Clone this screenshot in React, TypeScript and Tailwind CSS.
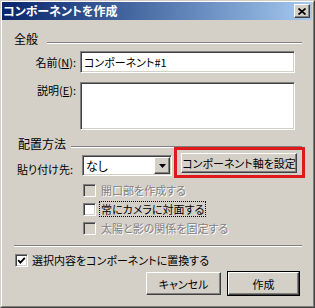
const font =
  "font-['Noto_Sans_CJK_JP','Noto_Sans',sans-serif] text-[11px] leading-[14px] [font-feature-settings:'palt'] text-black whitespace-nowrap";

const raised =
  "border border-t-white border-l-white border-r-[#404040] border-b-[#404040] shadow-[inset_-1px_-1px_0_#808080] bg-[#d4d0c8]";

const sunken =
  "border border-t-[#808080] border-l-[#808080] border-r-white border-b-white shadow-[inset_1px_1px_0_#404040,inset_-1px_-1px_0_#d4d0c8]";

function Etched({ className = "" }: { className?: string }) {
  return <div className={`h-[2px] border-t border-t-[#808080] border-b border-b-white ${className}`} />;
}

function CheckBox({ checked = false, disabled = false }: { checked?: boolean; disabled?: boolean }) {
  return (
    <div
      className={`w-[13px] h-[13px] shrink-0 flex items-center justify-center ${sunken} ${
        disabled ? "bg-[#d4d0c8]" : "bg-white"
      }`}
    >
      {checked && (
        <svg width="9" height="9" viewBox="0 0 9 9">
          <path d="M1.2 4.2 L3.4 6.6 L7.8 1.8" fill="none" stroke="black" strokeWidth="1.8" />
        </svg>
      )}
    </div>
  );
}

function Option({ label, disabled, focused }: { label: string; disabled?: boolean; focused?: boolean }) {
  return (
    <div className="h-[19px] flex items-start pl-[81px]">
      <CheckBox disabled={disabled} />
      <span
        className={`ml-[4px] px-[1px] -mt-[1px] ${
          disabled ? "text-[#808080] [text-shadow:1px_1px_0_#ffffff]" : ""
        } ${focused ? "outline outline-1 outline-dotted outline-black" : ""}`}
      >
        {label}
      </span>
    </div>
  );
}

export default function App() {
  return (
    <div className={`w-[315px] h-[308px] bg-[#d4d0c8] border border-t-[#d4d0c8] border-l-[#d4d0c8] border-r-[#404040] border-b-[#404040] ${font}`}>
      <div className="h-full border border-t-white border-l-white border-r-[#808080] border-b-[#808080] flex flex-col">
        {/* title bar */}
        <div className="h-[18px] mr-[1px] flex items-center justify-between bg-gradient-to-r from-[#0a246a] to-[#a6caf0]">
          <span className="pl-[1px] text-white font-bold text-[12px]">コンポーネントを作成</span>
          <div className={`w-[16px] h-[14px] mr-[2px] flex items-center justify-center ${raised}`}>
            <svg width="8" height="7" viewBox="0 0 8 7">
              <path d="M0.5 0.5 L7.5 6.5 M7.5 0.5 L0.5 6.5" stroke="black" strokeWidth="1.7" />
            </svg>
          </div>
        </div>

        <div className="flex flex-col pr-[11px]">
          {/* 全般 */}
          <div className="mt-[12px] h-[14px] flex items-start pl-[12px]">
            <span className="text-[12px]">全般</span>
            <Etched className="flex-1 ml-[9px] mt-[10px]" />
          </div>

          <div className="mt-[5px] flex items-center">
            <span className="w-[74px] text-right">
              名前(<span className="underline">N</span>):
            </span>
            <div className={`ml-[4px] w-[215px] h-[22px] bg-white flex items-center pl-[3px] ${sunken}`}>
              コンポーネント#1
            </div>
          </div>

          <div className="mt-[9px] flex items-start">
            <span className="w-[74px] text-right mt-[1px]">
              説明(<span className="underline">E</span>):
            </span>
            <div className={`ml-[4px] w-[215px] h-[48px] bg-white ${sunken}`} />
          </div>

          {/* 配置方法 */}
          <div className="mt-[7px] h-[14px] flex items-start pl-[16px]">
            <span className="text-[12px]">配置方法</span>
            <Etched className="flex-1 ml-[5px] mt-[9px]" />
          </div>

          <div className="mt-[2px] flex items-start">
            <span className="pl-[15px] w-[80px] mt-[9px]">貼り付け先:</span>
            <div className={`mt-[2px] w-[90px] h-[21px] bg-white flex items-center justify-between ${sunken}`}>
              <span className="pl-[3px] text-[12px]">なし</span>
              <div className={`w-[16px] h-[17px] mr-[1px] flex items-center justify-center ${raised}`}>
                <svg width="7" height="4" viewBox="0 0 7 4">
                  <polygon points="0,0 7,0 3.5,4" fill="black" />
                </svg>
              </div>
            </div>
            <div className="relative ml-[9px]">
              <div className={`w-[116px] h-[20px] flex items-center justify-center ${raised}`}>
                コンポーネント軸を設定
              </div>
              <div className="absolute -left-[7px] -top-[6px] -right-[8px] -bottom-[5px] border-[3px] border-[#e01a1a]" />
            </div>
          </div>

          <div className="mt-[8px] flex flex-col">
            <Option label="開口部を作成する" disabled />
            <Option label="常にカメラに対面する" focused />
            <Option label="太陽と影の関係を固定する" disabled />
          </div>

          <Etched className="mt-[4px] ml-[12px]" />

          <div className="mt-[7px] flex items-start pl-[13px]">
            <CheckBox checked />
            <span className="ml-[4px] -mt-[1px]">選択内容をコンポーネントに置換する</span>
          </div>

          <div className="mt-[4px] flex items-center pl-[144px]">
            <div className={`w-[75px] h-[23px] flex items-center justify-center ${raised}`}>キャンセル</div>
            <div className="ml-[6px] w-[73px] h-[25px] border border-black">
              <div className={`w-full h-full flex items-center justify-center ${raised}`}>作成</div>
            </div>
          </div>
        </div>
      </div>
    </div>
  );
}
